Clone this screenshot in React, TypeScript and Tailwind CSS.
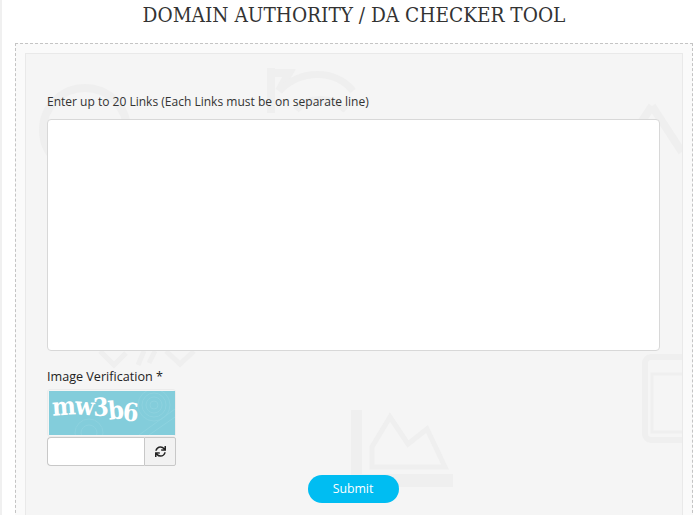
import React from 'react';
import { FaSync } from 'react-icons/fa';

const sans = { fontFamily: '"Open Sans", sans-serif' };

// captcha letters drift downwards in the picture
const captcha = [
  { c: 'm', y: -3, r: -4 },
  { c: 'w', y: -3, r: 4 },
  { c: '3', y: -2, r: -3 },
  { c: 'b', y: 1, r: -6 },
  { c: '6', y: 3, r: 5 },
];

// faint background drawings of the panel, coordinates are relative to the panel
const Watermark = () => (
  <svg className="absolute left-0 top-0 h-full w-full" viewBox="0 0 656 468" fill="none" stroke="#efefef">
    <circle cx="59" cy="76" r="42" strokeWidth="8" />
    <path d="M245 14v45M245 19h18l-10 18" strokeWidth="8" />
    <path d="M253 37c22-22 56-22 74 0M270 56c12-14 36-14 50 0" strokeWidth="7" />
    <path d="M626 52l-16 24M626 52l30 46" strokeWidth="8" />
    <path d="M74 297l14 14 12-12M118 297l-6 14M129 297l-6 12M140 297l14 13 14-13" strokeWidth="5" />
    <rect x="619" y="303" width="60" height="83" rx="6" strokeWidth="6" />
    <rect x="626" y="320" width="50" height="58" strokeWidth="3" />
    <path d="M330.5 356v64" strokeWidth="11" />
    <path d="M346 413v-20l18-30 18 27 19-15 18 38z" strokeWidth="5" />
    <path d="M325 426.5h102" strokeWidth="13" />
  </svg>
);

export default function App() {
  return (
    <div className="h-[515px] w-[700px] overflow-hidden border-l-2 border-[#f0f0f0] bg-white" style={sans}>
      <div className="ml-[13px] w-[678px]">
        <h1 className="h-[43px] pt-[3px] text-center text-[20.6px] leading-[25px] text-[#333]" style={{ fontFamily: '"DejaVu Serif Condensed", "Liberation Serif", serif', fontStretch: 'condensed' }}>
          DOMAIN AUTHORITY / DA CHECKER TOOL
        </h1>
        <div className="h-[480px] border border-dashed border-[#c4c4c4] bg-[#fafafa] pl-[9px] pr-[9px] pt-[9px]">
          <div className="relative h-[470px] border border-[#e9e9e9] bg-[#f5f5f5] pl-[21px] pr-[21px] pt-[39px]">
            <Watermark />
            <div className="relative">
              <label className="block text-[12.03px] leading-[18px] text-[#333]">
                Enter up to 20 Links (Each Links must be on separate line)
              </label>
              <textarea className="mt-[8px] block h-[232px] w-[613px] resize-none rounded-[4px] border border-[#d8d8d8] bg-white" />
              <label className="mt-[17px] block text-[12.6px] font-medium leading-[18px] text-[#222]">
                Image Verification *
              </label>
              <div className="mt-[3px] w-[129px] rounded-[3px] border border-[#ececec] p-px">
                <div className="relative h-[44px] w-[126px] overflow-hidden bg-[#83cddb]">
                  <svg className="absolute inset-0 h-full w-full" viewBox="0 0 126 44" fill="none" stroke="#8dd2df" strokeWidth="1">
                    <circle cx="105" cy="14" r="4" />
                    <circle cx="105" cy="14" r="8" />
                    <circle cx="105" cy="14" r="12" />
                    <circle cx="105" cy="14" r="16" />
                    <circle cx="40" cy="42" r="8" />
                    <circle cx="40" cy="42" r="14" />
                    <path d="M100 44l26-18M90 44l36-26" />
                  </svg>
                  <span className="absolute left-[3px] top-0 whitespace-nowrap text-[25px] font-bold leading-[38px] tracking-[-1px] text-white" style={{ fontFamily: '"DejaVu Serif Condensed", "DejaVu Serif", serif', fontStretch: 'condensed' }}>
                    {captcha.map(l => (
                      <span key={l.c} className="inline-block" style={{ transform: `translateY(${l.y}px) rotate(${l.r}deg)` }}>{l.c}</span>
                    ))}
                  </span>
                </div>
              </div>
              <div className="flex h-[29px] w-[129px]">
                <input className="h-full w-[97px] rounded-l-[4px] border border-r-0 border-[#c8c8c8] bg-white" />
                <button className="flex h-full w-[32px] items-center justify-center rounded-r-[2px] border border-[#c8c8c8] bg-[#f2f2f2] text-[11px] text-[#222]">
                  <FaSync />
                </button>
              </div>
              <div className="mt-[9px] flex w-[613px] justify-center">
                <button className="mr-[1px] h-[28px] w-[91px] rounded-full bg-[#00bdf2] text-[12.3px] font-medium text-white">
                  Submit
                </button>
              </div>
            </div>
          </div>
        </div>
      </div>
    </div>
  );
}
